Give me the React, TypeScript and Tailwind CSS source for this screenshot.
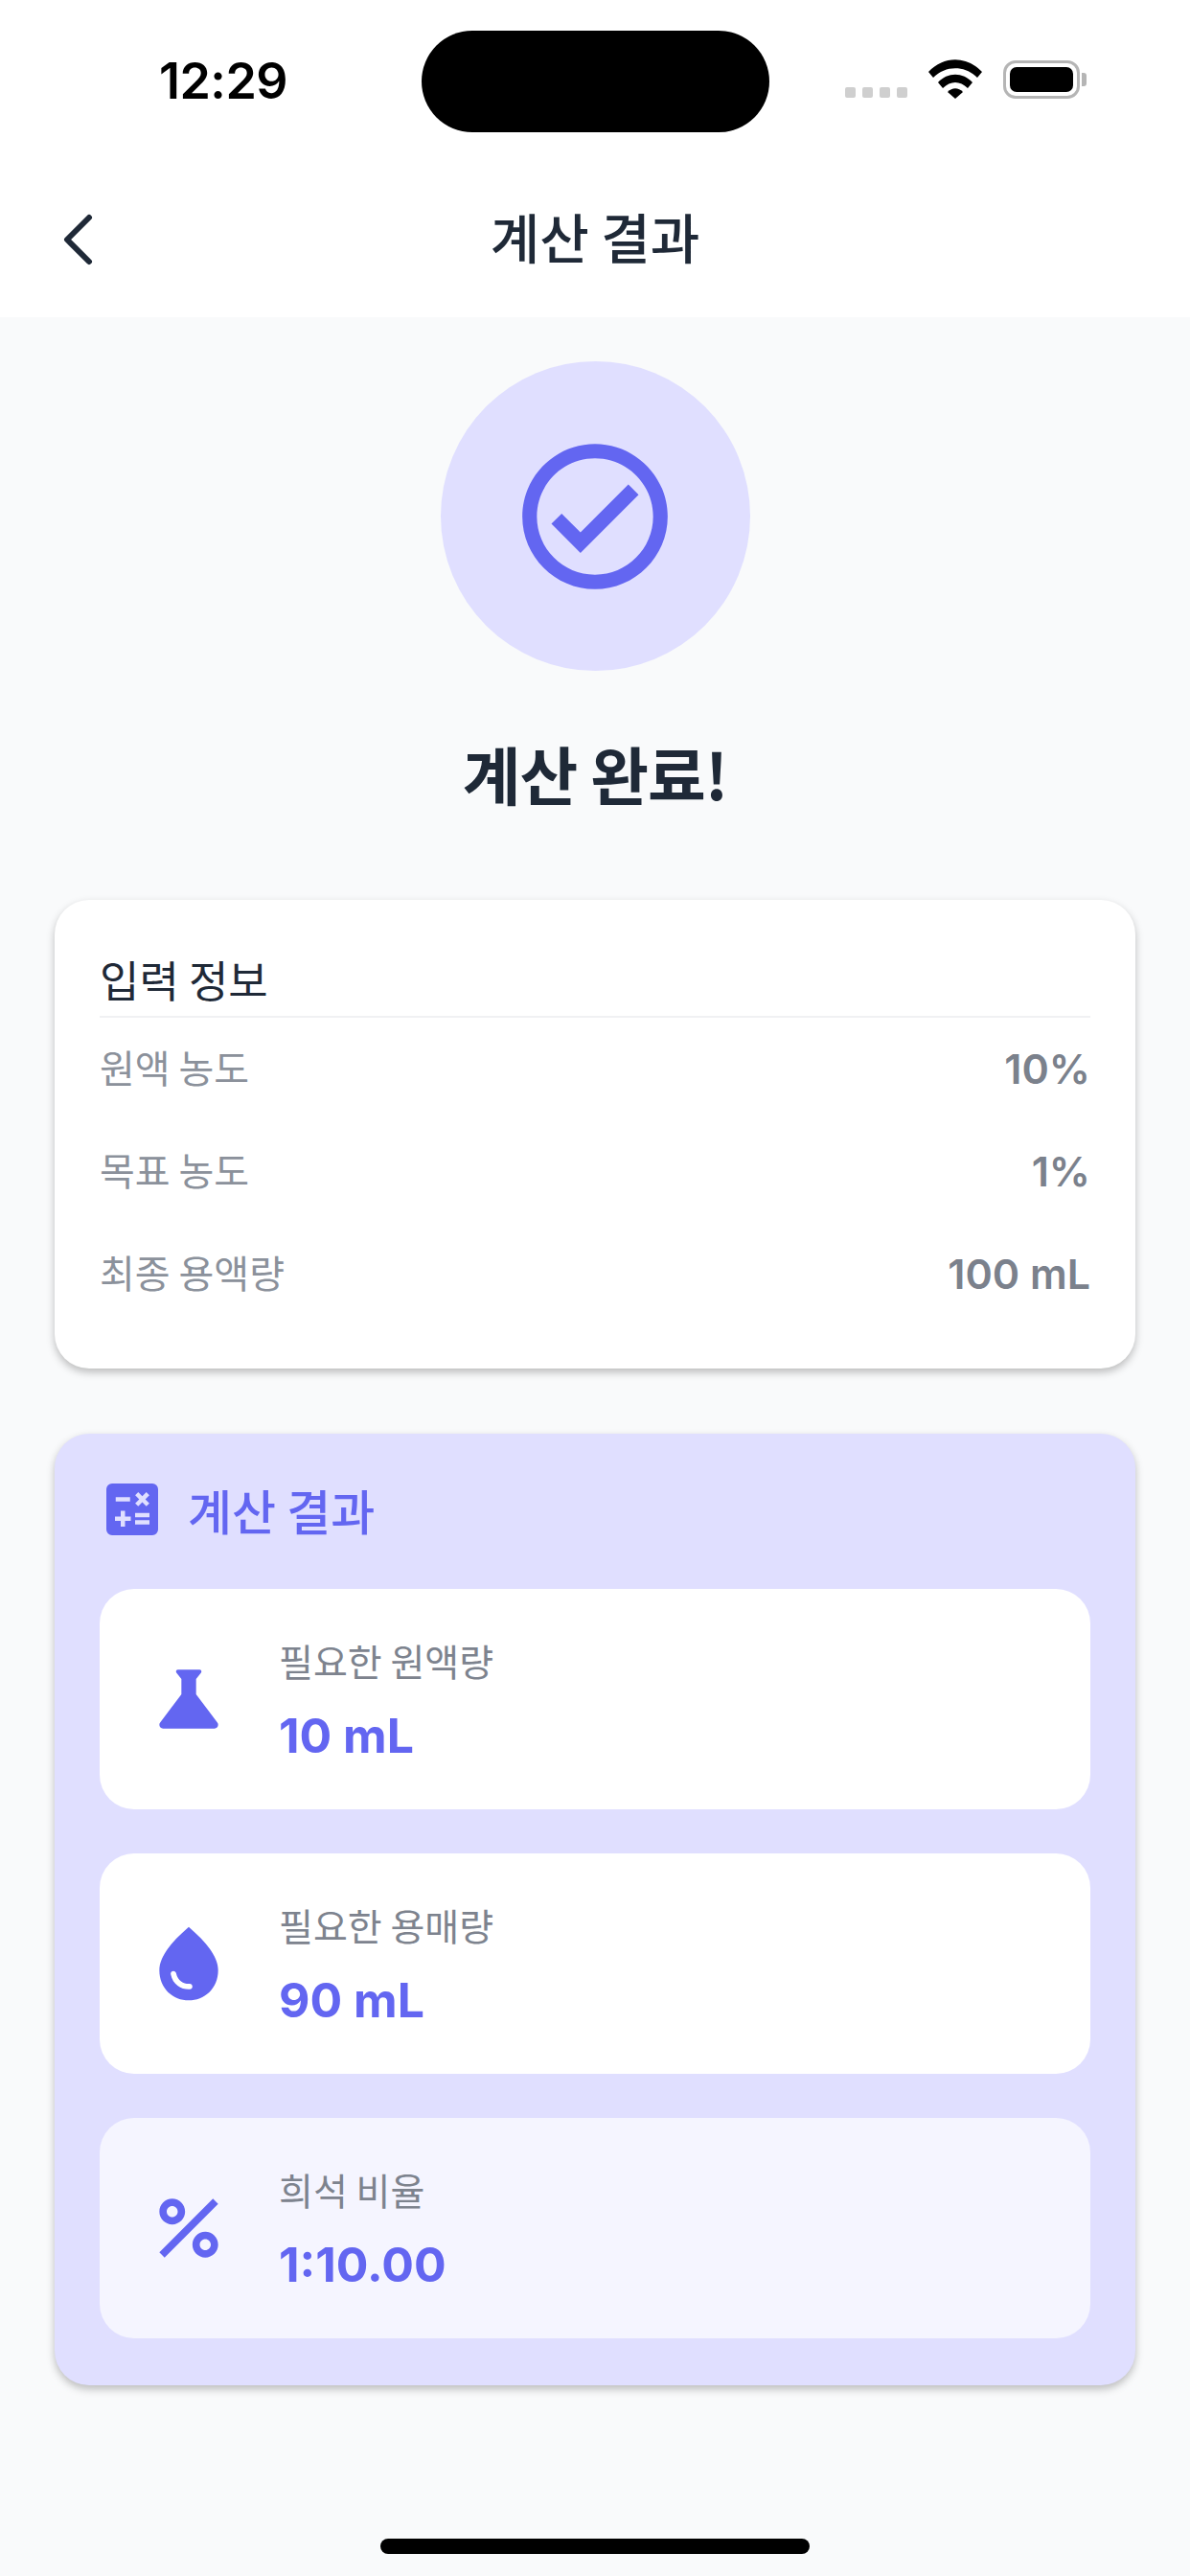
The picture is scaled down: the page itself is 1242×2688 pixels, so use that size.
const latin = "font-['Inter','Noto_Sans_CJK_KR',sans-serif]";

const Icon = ({ d, className }: { d: string; className: string }) => (
  <svg viewBox="0 0 24 24" className={className} fill="currentColor">
    <path d={d} />
  </svg>
);

const paths = {
  check:
    "M12 2C6.5 2 2 6.5 2 12S6.5 22 12 22 22 17.5 22 12 17.5 2 12 2M12 20C7.59 20 4 16.41 4 12S7.59 4 12 4 20 7.59 20 12 16.41 20 12 20M16.59 7.58L10 14.17L7.41 11.59L6 13L10 17L18 9L16.59 7.58Z",
  calc: "M19,3H5A2,2 0 0,0 3,5V19A2,2 0 0,0 5,21H19A2,2 0 0,0 21,19V5A2,2 0 0,0 19,3M13.03,7.06L14.09,6L15.5,7.41L16.91,6L17.97,7.06L16.56,8.47L17.97,9.88L16.91,10.94L15.5,9.54L14.09,10.94L13.03,9.88L14.44,8.47L13.03,7.06M6.25,7.72H11.25V9.22H6.25V7.72M11.5,16H9.5V18H8V16H6V14.5H8V12.5H9.5V14.5H11.5V16M18,17.25H13V15.75H18V17.25M18,14.75H13V13.25H18V14.75Z",
  science:
    "M19.8,18.4L14,10.67V6.5l1.35-1.69C15.61,4.48,15.38,4,14.96,4H9.04C8.62,4,8.39,4.48,8.65,4.81L10,6.5v4.17L4.2,18.4C3.71,19.06,4.18,20,5,20h14C19.82,20,20.29,19.06,19.8,18.4z",
  drop: "M12,2c-5.33,4.55-8,8.48-8,11.8c0,4.98,3.8,8.2,8,8.2s8-3.22,8-8.2C20,10.48,17.33,6.55,12,2z M7.83,14c0.37,0,0.67,0.26,0.74,0.62c0.41,2.22,2.28,2.98,3.64,2.87c0.43-0.02,0.79,0.32,0.79,0.75c0,0.4-0.32,0.73-0.72,0.75c-2.13,0.13-4.62-1.09-5.19-4.12C7.01,14.42,7.37,14,7.83,14z",
  percent:
    "M7.5,11C9.43,11 11,9.43 11,7.5S9.43,4 7.5,4S4,5.57 4,7.5S5.57,11 7.5,11z M7.5,6C8.33,6 9,6.67 9,7.5S8.33,9 7.5,9S6,8.33 6,7.5S6.67,6 7.5,6z M4.0025,18.5831L18.5875,3.9981L20.0019,5.4125L5.4169,19.9975z M16.5,13c-1.93,0-3.5,1.57-3.5,3.5s1.57,3.5,3.5,3.5s3.5-1.57,3.5-3.5S18.43,13,16.5,13z M16.5,18c-.83,0-1.5-.67-1.5-1.5s.67-1.5,1.5-1.5s1.5.67,1.5,1.5S17.33,18,16.5,18z",
};

const inputRows = [
  { label: "원액 농도", value: "10%" },
  { label: "목표 농도", value: "1%" },
  { label: "최종 용액량", value: "100 mL" },
];

const results = [
  { icon: paths.science, label: "필요한 원액량", value: "10 mL", bg: "bg-white" },
  { icon: paths.drop, label: "필요한 용매량", value: "90 mL", bg: "bg-white" },
  { icon: paths.percent, label: "희석 비율", value: "1:10.00", bg: "bg-[#f5f5ff]" },
];

const StatusIcons = () => (
  <div className="flex items-end h-[41px] mt-[62px] ml-[79px]">
    <div className="flex gap-[7px] mb-[1px]">
      <span className="w-[11px] h-[11px] rounded-[2px] bg-[#cfcfcf]" />
      <span className="w-[11px] h-[11px] rounded-[2px] bg-[#cfcfcf]" />
      <span className="w-[11px] h-[11px] rounded-[2px] bg-[#cfcfcf]" />
      <span className="w-[11px] h-[11px] rounded-[2px] bg-[#cfcfcf]" />
    </div>
    <svg viewBox="0 0 56 41" className="w-[56px] h-[41px] ml-[22px]" fill="black">
      <path d="M0 13 C16 -4 40 -4 56 13 L51 19 C38 6 18 6 5 19 Z" />
      <path d="M10 24 C20 13 36 13 46 24 L41 30 C33 22 23 22 15 30 Z" />
      <path d="M20 34 C25 29 31 29 36 34 L28 41 Z" />
    </svg>
    <div className="flex items-center ml-[22px]">
      <div className="w-[80px] h-[40px] rounded-[13px] border-[3px] border-[#b5b5b5] p-[4px]">
        <div className="w-full h-full rounded-[7px] bg-black" />
      </div>
      <span className="w-[5px] h-[14px] rounded-r-[3px] bg-[#b5b5b5] ml-[2px]" />
    </div>
  </div>
);

export default function App() {
  return (
    <div className="w-[1242px] h-[2688px] flex flex-col bg-[#f9fafb] font-['Noto_Sans_CJK_KR',sans-serif] overflow-hidden">
      <header className="h-[331px] bg-white shrink-0">
        <div className="flex h-[150px]">
          <div className="w-[440px] flex justify-center pl-[26px]">
            <span className={`${latin} mt-[56px] text-[52px] leading-[58px] font-semibold text-black tracking-[-0.5px]`}>
              12:29
            </span>
          </div>
          <div className="w-[363px] h-[106px] mt-[32px] rounded-[53px] bg-black" />
          <StatusIcons />
        </div>
        <div className="relative h-[181px] flex items-start justify-center">
          <svg viewBox="0 0 32 54" className="absolute left-[65px] top-[73px] w-[32px] h-[54px]" fill="none" stroke="#1f2937" strokeWidth="6" strokeLinecap="round" strokeLinejoin="round">
            <path d="M28 4 L5 27 L28 50" />
          </svg>
          <h1 className="mt-[66px] text-[56px] leading-[60px] font-medium text-[#1f2937]">계산 결과</h1>
        </div>
      </header>

      <main className="flex-1 flex flex-col items-center px-[57px]">
        <div className="mt-[46px] w-[323px] h-[323px] rounded-full bg-[#e0dfff] flex items-center justify-center">
          <Icon d={paths.check} className="w-[182px] h-[182px] text-[#6366f1]" />
        </div>
        <h2 className="mt-[71px] text-[66px] leading-[70px] font-bold text-[#1f2937] tracking-[-1px]">계산 완료!</h2>

        <section className="mt-[98px] w-full h-[489px] rounded-[36px] bg-white px-[47px] pt-[56px] shadow-[0_4px_8px_rgba(0,0,0,0.25)]">
          <h3 className="text-[45px] leading-[54px] font-normal text-[#1f2937] pb-[11px] border-b-2 border-[#f0f1f3]">입력 정보</h3>
          <div className="flex flex-col gap-[53px] mt-[26px]">
            {inputRows.map((row) => (
              <div key={row.label} className="flex items-center justify-between h-[54px]">
                <span className="mb-[4px] text-[40px] leading-[54px] text-[#8b919b]">{row.label}</span>
                <span className={`${latin} text-[43px] leading-[54px] font-semibold text-[#7b818c]`}>{row.value}</span>
              </div>
            ))}
          </div>
        </section>

        <section className="mt-[68px] w-full h-[993px] rounded-[36px] bg-[#e0dfff] px-[47px] pt-[52px] shadow-[0_4px_8px_rgba(0,0,0,0.25)]">
          <div className="flex items-center h-[54px]">
            <Icon d={paths.calc} className="w-[72px] h-[72px] text-[#6366f1] ml-[-2px]" />
            <h3 className="ml-[22px] text-[50px] leading-[54px] font-medium text-[#6366f1]">계산 결과</h3>
          </div>
          <div className="mt-[56px] flex flex-col gap-[46px]">
            {results.map((item) => (
              <div key={item.label} className={`${item.bg} h-[230px] rounded-[36px] flex items-center pl-[47px]`}>
                <Icon d={item.icon} className="w-[92px] h-[92px] text-[#6366f1]" />
                <div className="ml-[48px] flex flex-col">
                  <span className="text-[39px] leading-[54px] text-[#7d838e]">{item.label}</span>
                  <span className={`${latin} mt-[22px] text-[50px] leading-[60px] font-bold text-[#6366f1]`}>
                    {item.value}
                  </span>
                </div>
              </div>
            ))}
          </div>
        </section>

        <div className="mt-[160px] w-[448px] h-[16px] rounded-full bg-black" />
      </main>
    </div>
  );
}
